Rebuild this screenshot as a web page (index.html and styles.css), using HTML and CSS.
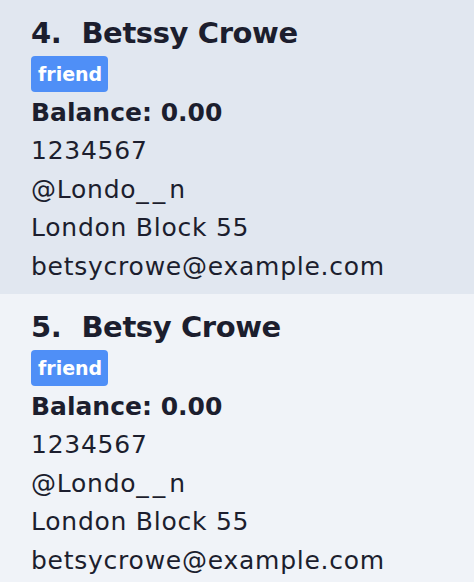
FILE: index.html
```html
<!DOCTYPE html>
<html>
<head>
<meta charset="utf-8">
<link rel="stylesheet" href="styles.css">
</head>
<body>
<div class="list">
  <div class="card card-selected">
    <div class="title"><span class="index">4.</span><span class="name">Betssy Crowe</span></div>
    <div class="tags"><span class="tag">friend</span></div>
    <div class="balance">Balance: 0.00</div>
    <div class="line">1234567</div>
    <div class="line">@Londo<span class="us">__</span>n</div>
    <div class="line">London Block 55</div>
    <div class="line">betsycrowe@example.com</div>
  </div>
  <div class="card">
    <div class="title"><span class="index">5.</span><span class="name">Betsy Crowe</span></div>
    <div class="tags"><span class="tag">friend</span></div>
    <div class="balance">Balance: 0.00</div>
    <div class="line">1234567</div>
    <div class="line">@Londo<span class="us">__</span>n</div>
    <div class="line">London Block 55</div>
    <div class="line">betsycrowe@example.com</div>
  </div>
</div>
</body>
</html>
```
FILE: styles.css
```css
html, body {
  margin: 0;
  padding: 0;
  background: #f0f3f8;
}
body {
  font-family: "DejaVu Sans", sans-serif;
  color: #1c1e2e;
}
.list {
  display: flex;
  flex-direction: column;
}
.card {
  background: #f0f3f8;
  padding: 13px 31px 11px;
  height: 294px;
  box-sizing: border-box;
}
.card-selected {
  background: #e1e7f0;
}
.title {
  font-size: 29px;
  font-weight: 700;
  line-height: 40px;
  display: flex;
  letter-spacing: -0.4px;
}
.index {
  margin-right: 20px;
}
.tags {
  display: flex;
  margin-top: 3px;
}
.tag {
  background: #4f8ff7;
  color: #ffffff;
  font-weight: 700;
  font-size: 19px;
  line-height: 36px;
  padding: 0 6px 0 7px;
  border-radius: 4px;
}
.balance {
  font-size: 25px;
  font-weight: 700;
  line-height: 38px;
  margin-top: 2px;
}
.line {
  font-size: 25px;
  line-height: 38.5px;
  letter-spacing: 0.75px;
}
.us {
  letter-spacing: 4px;
}
```
